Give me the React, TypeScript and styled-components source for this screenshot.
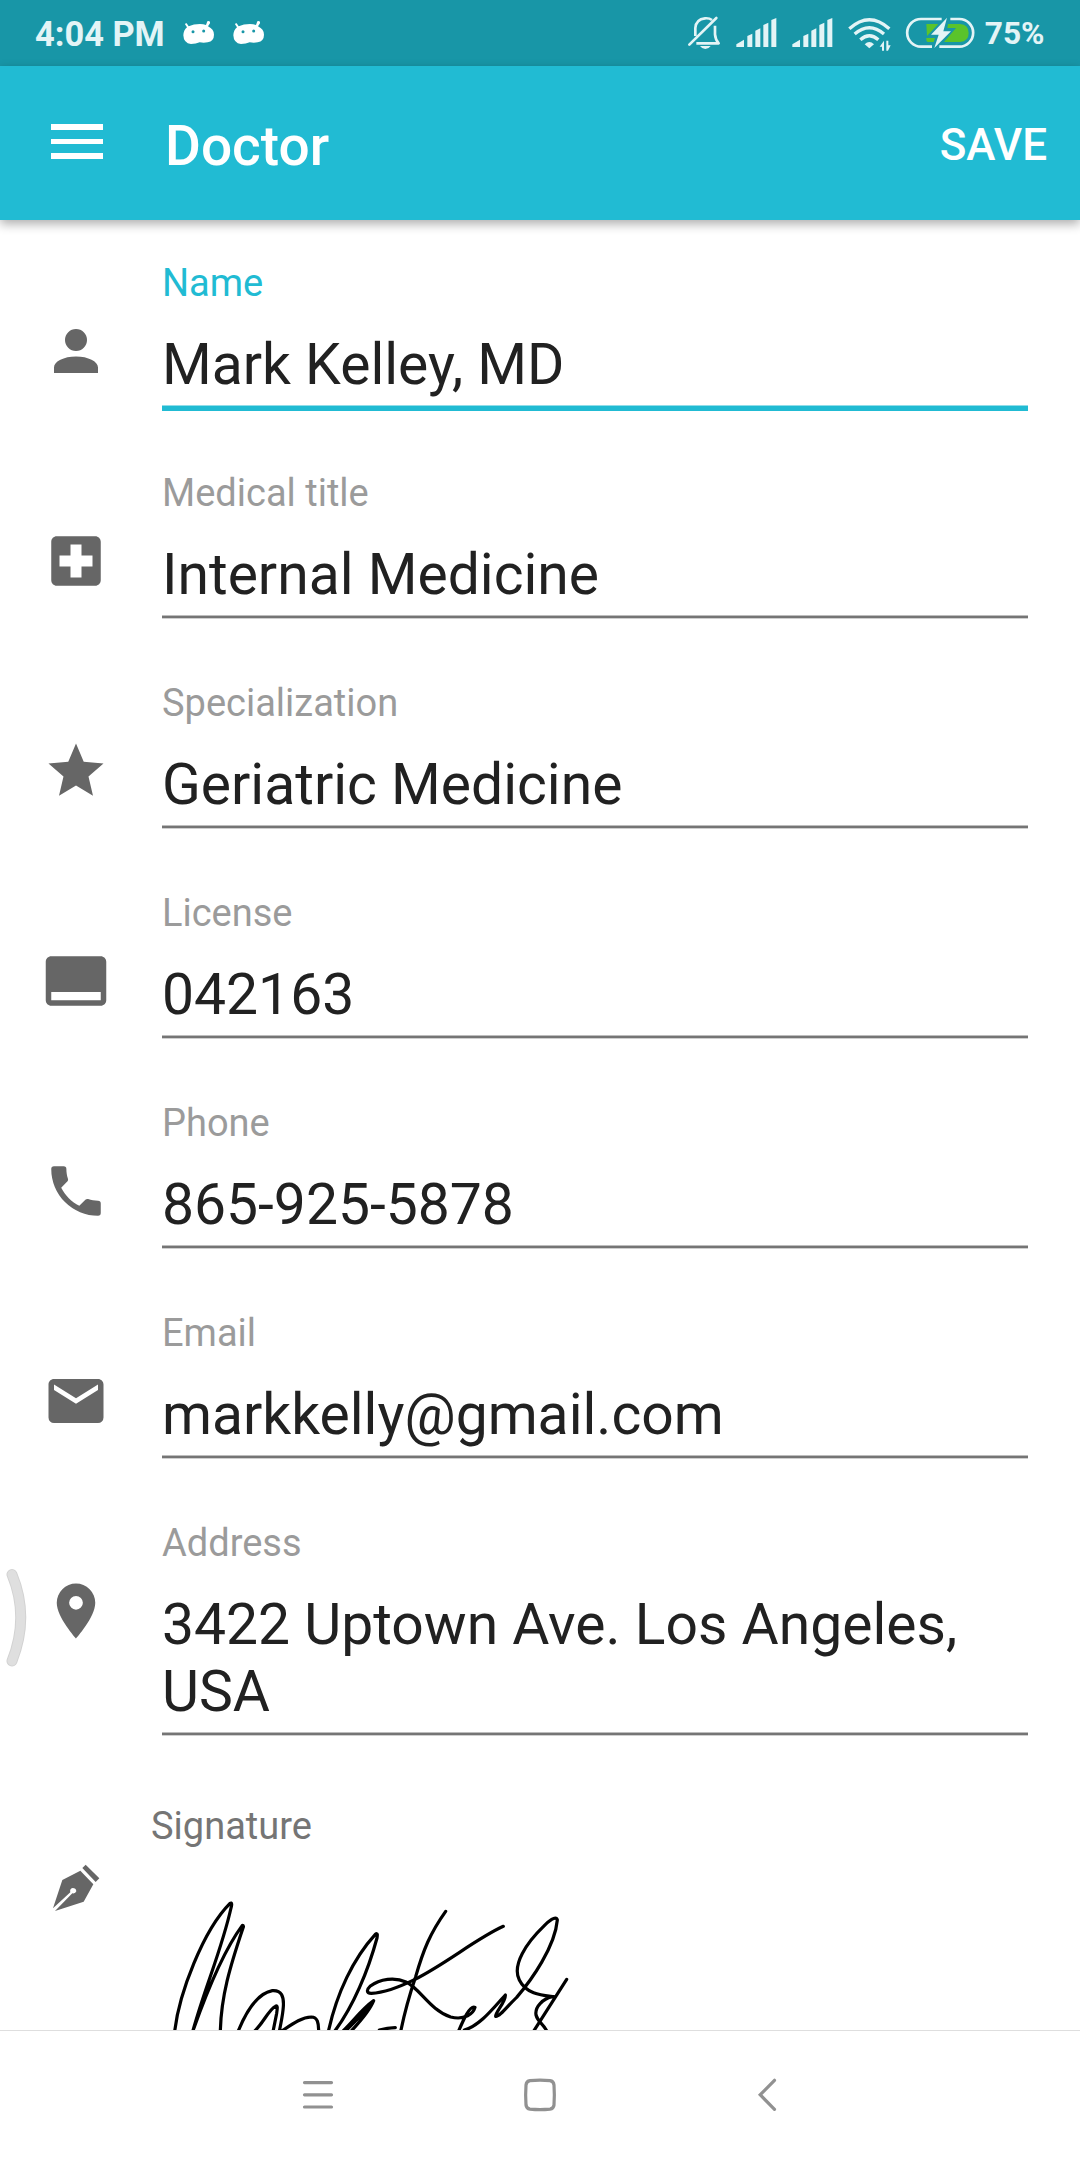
import React from "react";
import styled, { createGlobalStyle } from "styled-components";

const GlobalStyle = createGlobalStyle`
  body { margin: 0; background: #fff; }
  *, *::before, *::after { box-sizing: border-box; }
`;

const Screen = styled.div`
  position: relative;
  display: flex;
  flex-direction: column;
  width: 1080px;
  height: 2160px;
  overflow: hidden;
  background: #fff;
  font-family: Roboto, "Noto Sans", sans-serif;
`;

const StatusBar = styled.header`
  display: flex;
  flex: none;
  justify-content: space-between;
  height: 66px;
  padding: 0 35.5px 0 35px;
  background: #1896a7;
`;

const StatusGroup = styled.div`
  display: flex;
  align-items: flex-start;
`;

const StatusText = styled.span<{ $size: number; $left?: number }>`
  margin-left: ${(p) => p.$left ?? 0}px;
  padding-top: 1px;
  font-size: ${(p) => p.$size}px;
  font-weight: 700;
  line-height: 66px;
  white-space: nowrap;
  color: #e3f4f6;
`;

const StatusIcon = styled.svg<{ $left: number; $top: number }>`
  display: block;
  flex: none;
  margin-left: ${(p) => p.$left}px;
  margin-top: ${(p) => p.$top}px;
  overflow: visible;
`;

const AppBar = styled.div`
  position: relative;
  display: flex;
  flex: none;
  align-items: center;
  height: 154px;
  padding: 0 33px 0 51px;
  background: #21bbd3;
  color: #fff;
  box-shadow: 0 4px 10px rgba(0, 0, 0, 0.32);
`;

const MenuButton = styled.button`
  display: flex;
  flex-direction: column;
  gap: 9px;
  width: 52px;
  margin: 0 66px 3px 0;
  padding: 0;
  border: 0;
  background: none;
`;

const MenuLine = styled.span`
  height: 5.6px;
  background: #fff;
`;

const Title = styled.h1`
  flex: 1;
  margin: 6px 0 0 -4px;
  font-size: 55px;
  font-weight: 500;
  line-height: 64px;
`;

const SaveButton = styled.button`
  margin: 4px 0 0;
  padding: 0;
  border: 0;
  background: none;
  color: #fff;
  font: 500 44px/52px Roboto, sans-serif;
`;

const Form = styled.main`
  flex: 1;
  min-height: 0;
  overflow: hidden;
  padding: 26px 52px 0 43px;
`;

const FieldRow = styled.div`
  display: grid;
  grid-template-columns: 66px 1fr;
  column-gap: 53px;
  padding: 15px 0 45px;
`;

const IconCell = styled.div`
  padding-top: 57px;
`;

const FormIcon = styled.svg`
  display: block;
  width: 66px;
  height: 66px;
  fill: #666;
`;

const FieldBody = styled.div`
  display: flex;
  flex-direction: column;
`;

const Label = styled.label<{ $active?: boolean }>`
  height: 44px;
  margin-bottom: 26px;
  font-size: 38px;
  line-height: 44px;
  color: ${(p) => (p.$active ? "#21bbd3" : "#9b9b9b")};
`;

const Value = styled.div`
  margin-bottom: 7px;
  font-size: 57px;
  line-height: 67px;
  color: #212121;
`;

const Underline = styled.div<{ $active?: boolean }>`
  height: 6px;
  background: ${(p) =>
    p.$active
      ? "linear-gradient(#90dde9 1px, #21bbd3 1px)"
      : "linear-gradient(#bdbdbd 1px, #757575 1px, #757575 3px, #cfcfcf 3px, #cfcfcf 4px, transparent 4px)"};
`;

const SignatureRow = styled.section`
  display: grid;
  grid-template-columns: 66px 1fr;
  column-gap: 41px;
  padding-top: 21px;
`;

const SignatureIconCell = styled.div`
  padding-top: 51px;
`;

const SignatureBody = styled.div`
  display: flex;
  flex-direction: column;
`;

const SignatureLabel = styled.span`
  padding-left: 1px;
  font-size: 38px;
  line-height: 44px;
  color: #757575;
`;

const SignatureDrawing = styled.svg`
  display: block;
  width: 440px;
  height: 160px;
  margin-top: 42px;
  fill: none;
  stroke: #000;
  stroke-width: 9.6;
  stroke-linecap: round;
  stroke-linejoin: round;
`;

const NavBar = styled.nav`
  display: flex;
  flex: none;
  justify-content: space-between;
  align-items: center;
  height: 130px;
  padding: 0 300px 1px;
  border-top: 1px solid #dedede;
  background: #fff;
`;

const NavIcon = styled.svg`
  display: block;
  width: 36px;
  height: 36px;
  fill: none;
  stroke: #919191;
  stroke-width: 3.2;
  stroke-linecap: round;
  stroke-linejoin: round;
`;

const EdgeHandle = styled.svg`
  position: absolute;
  left: 0;
  top: 1560px;
`;

const icons = {
  person:
    "M12 4A4 4 0 0 1 16 8A4 4 0 0 1 12 12A4 4 0 0 1 8 8A4 4 0 0 1 12 4M12 14C16.42 14 20 15.79 20 18V20H4V18C4 15.79 7.58 14 12 14Z",
  medical:
    "M18 14H14V18H10V14H6V10H10V6H14V10H18M19 3H5C3.9 3 3 3.9 3 5V19C3 20.1 3.9 21 5 21H19C20.1 21 21 20.1 21 19V5C21 3.9 20.1 3 19 3Z",
  star: "M12 17.27L18.18 21L16.54 13.97L22 9.24L14.81 8.62L12 2L9.19 8.62L2 9.24L7.45 13.97L5.82 21L12 17.27Z",
  card: "M21 3H3c-1.1 0-2 .9-2 2v14c0 1.1.9 2 2 2h18c1.1 0 2-.9 2-2V5c0-1.1-.9-2-2-2zm0 16H3v-3h18v3z",
  phone:
    "M6.62 10.79C8.06 13.62 10.38 15.94 13.21 17.38L15.41 15.18C15.69 14.9 16.08 14.82 16.43 14.93C17.55 15.3 18.75 15.5 20 15.5A1 1 0 0 1 21 16.5V20A1 1 0 0 1 20 21A17 17 0 0 1 3 4A1 1 0 0 1 4 3H7.5A1 1 0 0 1 8.5 4C8.5 5.25 8.7 6.45 9.07 7.57C9.18 7.92 9.1 8.31 8.82 8.59L6.62 10.79Z",
  email:
    "M20 8L12 13L4 8V6L12 11L20 6M20 4H4C2.89 4 2 4.89 2 6V18A2 2 0 0 0 4 20H20A2 2 0 0 0 22 18V6C22 4.89 21.1 4 20 4Z",
  pin: "M12 11.5A2.5 2.5 0 0 1 9.5 9A2.5 2.5 0 0 1 12 6.5A2.5 2.5 0 0 1 14.5 9A2.5 2.5 0 0 1 12 11.5M12 2A7 7 0 0 0 5 9C5 14.25 12 22 12 22C12 22 19 14.25 19 9A7 7 0 0 0 12 2Z",
};

const fields: { label: string; value: string; icon: keyof typeof icons; active?: boolean }[] = [
  { label: "Name", value: "Mark Kelley, MD", icon: "person", active: true },
  { label: "Medical title", value: "Internal Medicine", icon: "medical" },
  { label: "Specialization", value: "Geriatric Medicine", icon: "star" },
  { label: "License", value: "042163", icon: "card" },
  { label: "Phone", value: "865-925-5878", icon: "phone" },
  { label: "Email", value: "markkelly@gmail.com", icon: "email" },
  { label: "Address", value: "3422 Uptown Ave. Los Angeles, USA", icon: "pin" },
];

const AndroidHead = ({ left }: { left: number }) => (
  <StatusIcon $left={left} $top={20} width={32} height={25} viewBox="546 60 96 75">
    <path
      fill="#fff"
      d="M563 79Q578 72 597 72Q607 72 615 75L619 64Q623 61 627 65V70L621 79Q639 88 639 104Q639 123 620 127Q608 129 596 127Q585 132 570 132Q548 130 547 106Q548 90 558 82L552 73Q553 69 557 70Z"
    />
    <circle cx="576" cy="95" r="4.5" fill="#1896a7" />
    <circle cx="608" cy="93" r="4.5" fill="#1896a7" />
  </StatusIcon>
);

const Signal = ({ left }: { left: number }) => (
  <StatusIcon $left={left} $top={18} width={41} height={29} viewBox="230 54 123 87" fill="#e3f4f6">
    <path d="M231 141V133L254 119V141ZM264 141V108L279 101V141ZM288 141V92L303 85V141ZM312 141V75L327 68V141ZM336 141V60L351 54V141Z" />
  </StatusIcon>
);

const Bell = () => (
  <StatusIcon $left={0} $top={16} width={33} height={34} viewBox="87 48 99 102" fill="none" stroke="#e3f4f6" strokeWidth="8">
    <path d="M109 108V84Q111 58 138 55Q151 54 159 60M168 77V103Q169 118 179 130H112" strokeLinejoin="round" />
    <path d="M91 134L172 54" strokeLinecap="round" />
    <path d="M123 138H155Q149 147 139 147Q129 147 123 138Z" fill="#e3f4f6" stroke="none" />
  </StatusIcon>
);

const Wifi = () => (
  <StatusIcon $left={15} $top={17} width={43} height={35} viewBox="566 51 129 105" fill="none" stroke="#e3f4f6" strokeWidth="10">
    <path d="M570 86Q630 32 690 86M586 102Q630 64 674 102M603 119Q630 95 657 119" />
    <path d="M616 133Q630 119 644 133L630 145Z" fill="#e3f4f6" stroke="none" />
    <path d="M674 152V122L661 140H668V152ZM681 122V152H686L694 136H687V122Z" fill="#e3f4f6" stroke="none" />
  </StatusIcon>
);

const Battery = () => (
  <StatusIcon $left={15} $top={17} width={69} height={32} viewBox="740 51 207 96">
    <path
      d="M847 57H785A41 41 0 0 0 785 140H818M873 57H900A41 41 0 0 1 900 140H840"
      fill="none"
      stroke="#e3f4f6"
      strokeWidth="8"
    />
    <path d="M801 72H837L803 108ZM801 114H827L823 126H806Q801 126 801 120Z" fill="#5ac32b" />
    <path d="M866 72H902Q928 74 928 99Q928 124 902 126H854L890 84H864Z" fill="#5ac32b" />
    <path d="M863 53L815 104H838L825 144L875 94H852Z" fill="#e3f4f6" />
  </StatusIcon>
);

export default function App() {
  return (
    <Screen>
      <GlobalStyle />
      <StatusBar>
        <StatusGroup>
          <StatusText $size={34.4}>4:04 PM</StatusText>
          <AndroidHead left={18} />
          <AndroidHead left={18} />
        </StatusGroup>
        <StatusGroup>
          <Bell />
          <Signal left={15} />
          <Signal left={15} />
          <Wifi />
          <Battery />
          <StatusText $size={31.7} $left={9.5}>
            75%
          </StatusText>
        </StatusGroup>
      </StatusBar>
      <AppBar>
        <MenuButton aria-label="Menu">
          <MenuLine />
          <MenuLine />
          <MenuLine />
        </MenuButton>
        <Title>Doctor</Title>
        <SaveButton>SAVE</SaveButton>
      </AppBar>
      <Form>
        {fields.map((field) => (
          <FieldRow key={field.label}>
            <IconCell>
              <FormIcon viewBox="0 0 24 24">
                <path fillRule="evenodd" d={icons[field.icon]} />
              </FormIcon>
            </IconCell>
            <FieldBody>
              <Label $active={field.active}>{field.label}</Label>
              <Value>{field.value}</Value>
              <Underline $active={field.active} />
            </FieldBody>
          </FieldRow>
        ))}
        <SignatureRow>
          <SignatureIconCell>
            <FormIcon viewBox="129 1065 198 198">
              <path d="M241 1112L187 1140L159 1225L211 1177Q208 1166 218 1164Q228 1164 229 1174Q226 1182 217 1180L165 1233L251 1205L280 1153ZM247 1104L257 1094L298 1135L287 1146Z" />
            </FormIcon>
          </SignatureIconCell>
          <SignatureBody>
            <SignatureLabel>Signature</SignatureLabel>
            <SignatureDrawing viewBox="0 330 1320 480">
              <path d="M74 755C87 640 160 450 240 370C246 366 246 374 243 384C215 510 165 620 128 755C165 650 215 520 277 436C281 436 281 440 279 444C240 560 213 650 211 755" />
              <path d="M264 755C290 690 325 640 367 632C395 630 402 650 400 680C398 710 392 730 388 755M312 755C340 730 355 690 376 679C384 674 382 685 380 700L369 755M397 752C430 730 455 712 484 711C503 711 506 730 506 755" />
              <path d="M535 755C560 640 610 535 676 463C684 457 682 467 681 474C655 570 610 680 553 755M577 755C610 725 632 690 671 662C660 690 630 725 602 755M590 750L655 684" />
              <path d="M688 750Q712 744 736 743M752 755C765 690 780 640 797 590C820 510 840 460 887 394" />
              <path d="M1060 439C980 475 890 550 795 598C740 625 700 638 664 640C648 640 650 628 660 619C690 596 735 591 768 606C810 625 840 690 902 711C945 722 970 700 975 682C960 674 940 720 925 755" />
              <path d="M943 750C990 738 1035 678 1066 645C1068 665 1036 696 1037 709C1048 712 1075 675 1100 652C1145 600 1215 500 1222 420C1218 405 1195 424 1180 440C1130 488 1085 555 1108 600C1130 645 1180 646 1212 650M1250 598L1150 755M1208 650C1180 655 1154 680 1158 705C1163 725 1178 730 1190 752" />
            </SignatureDrawing>
          </SignatureBody>
        </SignatureRow>
      </Form>
      <NavBar>
        <NavIcon viewBox="0 0 36 36">
          <path d="M4.5 5.6H31.5M4.5 17.8H31.5M4.5 30H31.5" />
        </NavIcon>
        <NavIcon viewBox="0 0 36 36">
          <path d="M8 3.7Q18 2.7 28 3.7Q31.600 4.200 32 8Q32.700 18 32 28Q31.600 31.600 28 32.100Q18 33.100 8 32.100Q4.400 31.600 4 28Q3.300 18 4 8Q4.400 4.200 8 3.700Z" />
        </NavIcon>
        <NavIcon viewBox="0 0 36 36">
          <path d="M30.500 3.300L16.200 17.800L30.500 32.300" strokeLinejoin="miter" />
        </NavIcon>
      </NavBar>
      <EdgeHandle width={32} height={120} viewBox="0 0 32 120" fill="none" strokeLinecap="round">
        <path d="M12 14.500Q29.500 57 12 101" stroke="#d2d2d2" strokeWidth="11" />
        <path d="M12 14.500Q29.500 57 12 101" stroke="#dfdfdf" strokeWidth="9" />
      </EdgeHandle>
    </Screen>
  );
}
